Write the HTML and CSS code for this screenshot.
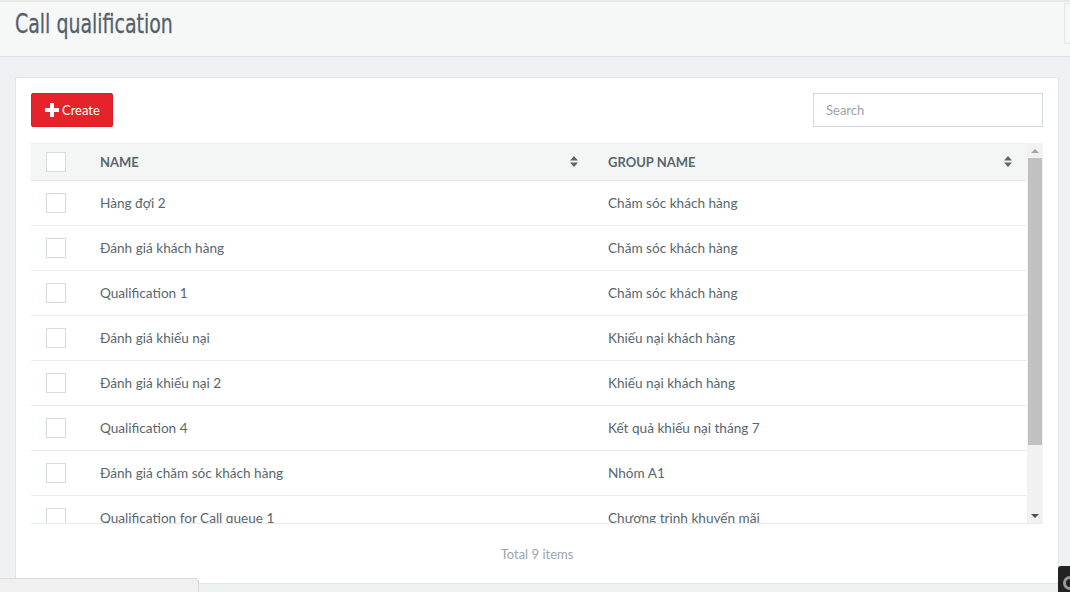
FILE: index.html
```html
<!DOCTYPE html>
<html lang="vi">
<head>
<meta charset="utf-8">
<title>Call qualification</title>
<link rel="stylesheet" href="styles.css">
</head>
<body>
<header class="topbar">
  <h1 class="page-title">Call qualification</h1>
  <div class="topbar-box"></div>
</header>
<main class="content">
  <section class="card">
    <div class="toolbar">
      <button class="btn-create" type="button">
        <svg class="plus" width="14" height="14" viewBox="0 0 14 14"><path d="M5 0h4v5h5v4H9v5H5V9H0V5h5z" fill="#fff"/></svg>
        <span>Create</span>
      </button>
      <input class="search" type="text" placeholder="Search">
    </div>
    <div class="table-wrap">
      <div class="table-view">
        <div class="row head">
          <div class="cell cb"><span class="check"></span></div>
          <div class="cell sortable">NAME<svg class="sort" width="8" height="11" viewBox="0 0 8 11"><path d="M4 0L8 4.5H0z M0 6.5h8L4 11z" fill="#58666e"/></svg></div>
          <div class="cell sortable">GROUP NAME<svg class="sort" width="8" height="11" viewBox="0 0 8 11"><path d="M4 0L8 4.5H0z M0 6.5h8L4 11z" fill="#58666e"/></svg></div>
        </div>
        <div class="row"><div class="cell cb"><span class="check"></span></div><div class="cell">Hàng đợi 2</div><div class="cell">Chăm sóc khách hàng</div></div>
        <div class="row"><div class="cell cb"><span class="check"></span></div><div class="cell">Đánh giá khách hàng</div><div class="cell">Chăm sóc khách hàng</div></div>
        <div class="row"><div class="cell cb"><span class="check"></span></div><div class="cell">Qualification 1</div><div class="cell">Chăm sóc khách hàng</div></div>
        <div class="row"><div class="cell cb"><span class="check"></span></div><div class="cell">Đánh giá khiếu nại</div><div class="cell">Khiếu nại khách hàng</div></div>
        <div class="row"><div class="cell cb"><span class="check"></span></div><div class="cell">Đánh giá khiếu nại 2</div><div class="cell">Khiếu nại khách hàng</div></div>
        <div class="row"><div class="cell cb"><span class="check"></span></div><div class="cell">Qualification 4</div><div class="cell">Kết quả khiếu nại tháng 7</div></div>
        <div class="row"><div class="cell cb"><span class="check"></span></div><div class="cell">Đánh giá chăm sóc khách hàng</div><div class="cell">Nhóm A1</div></div>
        <div class="row"><div class="cell cb"><span class="check"></span></div><div class="cell">Qualification for Call queue 1</div><div class="cell">Chương trình khuyến mãi</div></div>
        <div class="row"><div class="cell cb"><span class="check"></span></div><div class="cell">Qualification 5</div><div class="cell">Nhóm A1</div></div>
      </div>
      <div class="scrollbar">
        <div class="sb-btn"><svg width="8" height="4" viewBox="0 0 8 4"><path d="M4 0L8 4H0z" fill="#a3a3a3"/></svg></div>
        <div class="sb-track"><div class="sb-thumb"></div></div>
        <div class="sb-btn"><svg width="8" height="4" viewBox="0 0 8 4"><path d="M0 0h8L4 4z" fill="#505050"/></svg></div>
      </div>
    </div>
    <div class="table-footer">Total 9 items</div>
  </section>
</main>
<div class="bottom-tab"></div>
<div class="chat-widget"><span class="chat-dot"></span></div>
</body>
</html>
```
FILE: styles.css
```css
* { box-sizing: border-box; }
html, body { margin: 0; padding: 0; }
body {
  background: #eef1f2;
  font-family: Lato, "Open Sans", "Liberation Sans", sans-serif;
  color: #58666e;
  font-size: 13.6px;
  width: 1070px;
  height: 592px;
  overflow: hidden;
}
.topbar {
  height: 57px;
  background: #f6f8f8;
  border-top: 2px solid #e6e9ea;
  border-bottom: 1px solid #dce3e6;
  display: flex;
  align-items: flex-start;
  justify-content: space-between;
  padding-left: 15px;
}
.page-title {
  margin: 3px 0 0;
  font-family: "DejaVu Sans Condensed", "Liberation Sans", sans-serif;
  font-stretch: condensed;
  font-weight: 400;
  font-size: 27px;
  line-height: 38px;
  color: #55616b;
  transform: scaleX(0.78);
  transform-origin: left center;
  -webkit-text-stroke: 0.3px #55616b;
  white-space: nowrap;
}
.topbar-box {
  width: 6px;
  height: 41px;
  margin-top: 1px;
  border: 1px solid #dfe4e6;
  border-right: 0;
  border-radius: 2px 0 0 2px;
  background: #f6f8f8;
}
.content {
  padding: 20px 11px 0 15px;
}
.card {
  background: #fff;
  border: 1px solid #e1e6e8;
  border-radius: 2px;
  padding: 15px 15px 0;
  height: 507px;
}
.toolbar {
  display: flex;
  justify-content: space-between;
  align-items: center;
  height: 34px;
  margin-bottom: 16px;
}
.btn-create {
  display: flex;
  align-items: center;
  gap: 3px;
  height: 34px;
  width: 82px;
  padding: 0 0 0 13px;
  background: #e5232b;
  border: 1px solid #d91f26;
  border-radius: 2px;
  color: #fff;
  font-family: inherit;
  font-size: 13px;
}
.plus { display: block; }
.search {
  width: 230px;
  height: 34px;
  border: 1px solid #cfdadd;
  border-radius: 0;
  padding: 0 12px;
  font-family: inherit;
  font-size: 13px;
  color: #58666e;
  outline: none;
}
.search::placeholder { color: #9aa3a8; }
.table-wrap {
  display: flex;
  height: 381px;
  border-bottom: 1px solid #e8ecee;
}
.table-view {
  flex: 1;
  overflow: hidden;
}
.scrollbar {
  width: 16px;
  display: flex;
  flex-direction: column;
  background: #f1f1f1;
}
.sb-btn {
  height: 15px;
  display: flex;
  align-items: center;
  justify-content: center;
}
.sb-track {
  flex: 1;
}
.sb-thumb {
  height: 287px;
  margin: 0 1px;
  background: #c1c1c1;
}
.row {
  display: grid;
  grid-template-columns: 54px 508px 1fr;
  height: 45px;
  border-bottom: 1px solid #eaeef0;
  align-items: center;
}
.row.head {
  height: 38px;
  background: #f4f6f6;
  border-top: 1px solid #eef1f2;
  border-bottom: 1px solid #e5eaec;
  font-weight: 700;
  font-size: 13px;
  color: #58666e;
}
.cell {
  padding: 0 15px 1px;
  white-space: nowrap;
}
.cell.cb { padding-left: 15px; padding-right: 0; }
.check {
  display: block;
  width: 20px;
  height: 20px;
  border: 1px solid #d4dde0;
  background: #fff;
}
.sortable {
  display: flex;
  align-items: center;
  justify-content: space-between;
}
.sort { display: block; }
.table-footer {
  height: 59px;
  display: flex;
  align-items: center;
  justify-content: center;
  font-size: 13px;
  color: #9ea5aa;
}
.bottom-tab {
  position: fixed;
  left: 0;
  bottom: 0;
  width: 199px;
  height: 14px;
  background: #f0f0f0;
  border: 1px solid #d9d9d9;
  border-left: 0;
  border-bottom: 0;
  border-radius: 0 4px 0 0;
}
.chat-widget {
  position: fixed;
  left: 1058px;
  top: 566px;
  width: 12px;
  height: 26px;
  background: #222;
  border-radius: 3px 0 0 0;
  overflow: hidden;
}
.chat-dot {
  position: absolute;
  left: 5px;
  top: 10px;
  width: 14px;
  height: 14px;
  border-radius: 50%;
  border: 3px solid #999;
}
```
